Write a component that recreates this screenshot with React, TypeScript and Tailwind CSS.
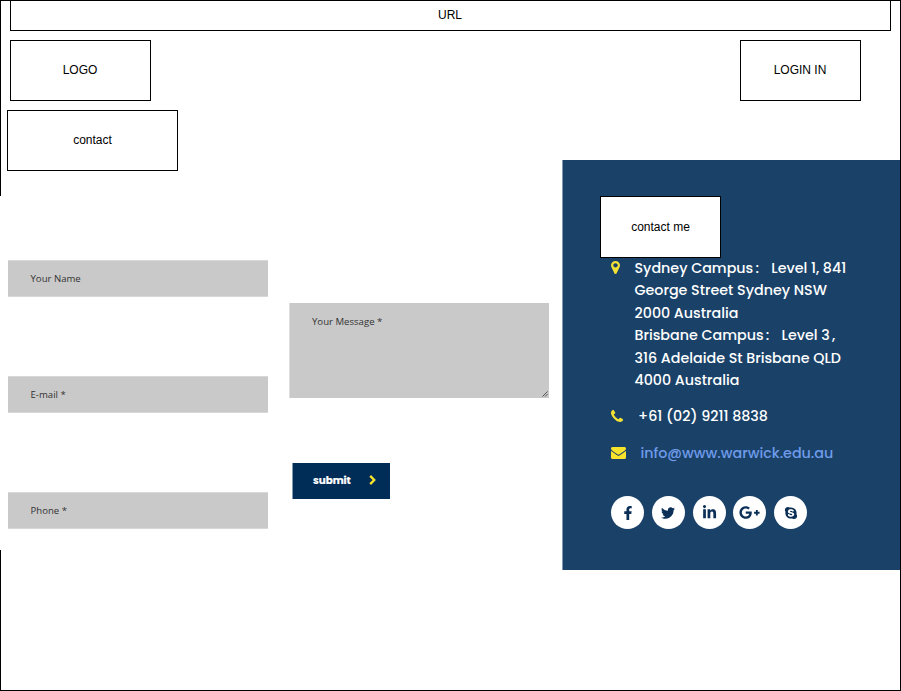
import React from "react";
import { FaFacebookF, FaTwitter, FaLinkedinIn, FaGooglePlusG, FaSkype } from "react-icons/fa";

const labelFont = "font-['Liberation_Sans',Arial,sans-serif] text-[12px] leading-[14px] text-black";
const fieldFont = "font-['Open_Sans',sans-serif] text-[9.6px] leading-[14px] text-[#333333]";
const panelFont = "font-['Poppins',Inter,sans-serif] font-medium text-[14.28px] whitespace-pre";

function Box({ className, children }: { className: string; children: React.ReactNode }) {
  return (
    <div className={`flex items-center justify-center border border-black bg-white ${labelFont} ${className}`}>
      {children}
    </div>
  );
}

function Field({ label }: { label: string }) {
  return (
    <div className={`flex h-[37px] w-[260px] items-center border-y border-[#d8d8d8] bg-[#c9c9c9] pl-[22.5px] pt-px ${fieldFont}`}>
      {label}
    </div>
  );
}

const address = [
  <>Sydney Campus<span className="-ml-[1.5px] mr-[1.5px]"> :</span>{"\u2002 Level 1, 841"}</>,
  "George Street Sydney NSW",
  "2000 Australia",
  <>Brisbane Campus<span className="-ml-[1.5px] mr-[1.5px]"> :</span>{"\u2002 Level 3"}<span className="-ml-[1.5px]"> ,</span></>,
  "316 Adelaide St Brisbane QLD",
  "4000 Australia",
];

const socials = [
  { name: "Facebook", icon: <FaFacebookF size={14} /> },
  { name: "Twitter", icon: <FaTwitter size={14} /> },
  { name: "LinkedIn", icon: <FaLinkedinIn size={15} /> },
  { name: "Google Plus", icon: <FaGooglePlusG size={21} /> },
  { name: "Skype", icon: <FaSkype size={14} /> },
];

export default function App() {
  return (
    <div className="flex h-[691px] w-[901px] flex-col overflow-hidden border-y border-r border-black bg-white">
      <div className="h-[30px] shrink-0 border-l border-black pl-[9px]">
        <Box className="h-[30px] w-[881px] border-t-0 pb-px pr-px">URL</Box>
      </div>

      <header className="flex h-[70px] shrink-0 items-end justify-between border-l border-black pl-[9px] pr-[39px]">
        <Box className="h-[61px] w-[141px] pb-px pr-px">LOGO</Box>
        <Box className="h-[61px] w-[121px] pb-px pr-px">LOGIN IN</Box>
      </header>

      <main className="flex h-[589px]">
        <div className="flex w-[562px] shrink-0 flex-col">
          <div className="h-[95px] border-l border-black pl-[6px] pt-[9px]">
            <Box className="h-[61px] w-[171px] pb-px">contact</Box>
          </div>

          <form className="flex h-[354px] pl-[8px]">
            <div className="flex flex-col gap-[79px] pt-[64px]">
              <Field label="Your Name" />
              <Field label="E-mail *" />
              <Field label="Phone *" />
            </div>
            <div className="ml-[21px] flex flex-col pt-[107px]">
              <div className={`flex h-[95px] w-[260px] justify-between border-l border-[#dedede] bg-[#c9c9c9] pl-[22px] pt-[12px] ${fieldFont}`}>
                Your Message *
                <svg className="mr-px mb-px h-[6px] w-[6px] self-end" viewBox="0 0 7 7" stroke="#444" strokeWidth="1">
                  <path d="M0.5 6.5L6.5 0.5M3.5 6.5L6.5 3.5" />
                </svg>
              </div>
              <button
                type="button"
                className="ml-[3px] mt-[65px] flex h-[36px] w-[98px] items-center border-l border-[#8298ae] bg-[#002c58] pl-[20px] font-['Poppins',Inter,sans-serif] text-[10.3px] font-bold text-white"
              >
                <span className="w-[56px] text-left [-webkit-text-stroke:0.2px_white]">submit</span>
                <svg className="-mt-[3px] h-[10px] w-[7px]" viewBox="0 0 7 10" fill="none" stroke="#f8e32c" strokeWidth="2.4">
                  <path d="M1.2 0.9L5.2 5L1.2 9.1" />
                </svg>
              </button>
            </div>
          </form>

          <div className="h-[140px] border-l border-black" />
        </div>

        <aside className="mt-[59px] h-[410px] w-[338px] border-l border-[#8298ae] bg-[#1a4269] pl-[37px] pt-[36px]">
          <Box className="h-[62px] w-[121px] pb-px">contact me</Box>

          <div className="flex h-[134px] pl-[11px]">
            <svg className="mt-[3px] h-[13px] w-[9px] shrink-0" viewBox="0 128 1024 1536" preserveAspectRatio="none" fill="#f3e233">
              <path d="M768 640q0-106-75-181t-181-75-181 75-75 181 75 181 181 75 181-75 75-181zm256 0q0 109-33 179l-364 774q-16 33-47.500 52t-67.500 19-67.500-19-46.500-52l-365-774q-33-70-33-179 0-212 150-362t362-150 362 150 150 362z" />
            </svg>
            <div className={`-mt-px ml-[14.5px] text-white ${panelFont}`}>
              {address.map((line, i) => (
                <div key={i} className="h-[22.4px] leading-[22px]">
                  {line}
                </div>
              ))}
            </div>
          </div>

          <div className="mt-[13px] flex h-[24px] items-center pl-[11px]">
            <svg className="-mt-[3px] h-[12px] w-[12px]" viewBox="0 128 1408 1408" fill="#f3e233">
              <path d="M1408 1240q0 27-10 70.500t-21 68.500q-21 50-122 106-94 51-186 51-27 0-53-3.500t-57-12.500-47-14.500-55.500-20.500-49.500-18q-98-35-175-83-127-79-264-216t-216-264q-48-77-83-175-3-9-18-49.500t-20.500-55.500-14.500-47-12.500-57-3.500-53q0-92 51-186 56-101 106-122 25-11 68.500-21t70.500-10q14 0 21 3 18 6 53 76 11 19 30 54t35 63.500 31 53.500q3 4 17.500 25t21.500 35.500 7 28.500q0 20-28.500 50t-62 55-62 53-28.500 46q0 9 5 22.500t8.500 20.500 14 24 11.500 19q76 137 174 235t235 174q2 1 19 11.500t24 14 20.500 8.500 22.500 5q18 0 46-28.500t53-62 55-62 50-28.500q14 0 28.500 7t35.500 21.500 25 17.500q25 15 53.500 31t63.500 35 54 30q70 35 76 53 3 7 3 21z" />
            </svg>
            <span className={`ml-[15px] text-white ${panelFont}`}>+61 (02) 9211 8838</span>
          </div>

          <div className="mt-[13px] flex h-[24px] items-center pl-[11px]">
            <svg className="-mt-[2px] h-[12px] w-[15px]" viewBox="0 256 1792 1408" preserveAspectRatio="none" fill="#f8e32c">
              <path d="M1792 710v794q0 66-47 113t-113 47h-1472q-66 0-113-47t-47-113v-794q44 49 101 87 362 246 497 345 57 42 92.500 65.500t94.500 48 110 24.500h2q51 0 110-24.500t94.500-48 92.500-65.500q170-123 498-345 57-39 100-87zm0-294q0 79-49 151t-122 123q-376 261-468 325-10 7-42.500 31t-54 38.500-52 32.500-57.500 27-50 9h-2q-23 0-50-9t-57.500-27-52-32.500-54-38.500-42.500-31q-91-64-262-182.500t-205-142.500q-62-42-117-115.500t-55-136.500q0-78 41.500-130t118.500-52h1472q65 0 112.500 47t47.500 113z" />
            </svg>
            <span className={`ml-[14.5px] text-[#6f9bea] ${panelFont}`}>info@www.warwick.edu.au</span>
          </div>

          <div className="mt-[30px] flex gap-[7.8px] pl-[11px]">
            {socials.map((s) => (
              <a
                key={s.name}
                aria-label={s.name}
                className="flex h-[33px] w-[33px] items-center justify-center rounded-full bg-white text-[#0b2f57]"
              >
                {s.icon}
              </a>
            ))}
          </div>
        </aside>
      </main>
    </div>
  );
}
